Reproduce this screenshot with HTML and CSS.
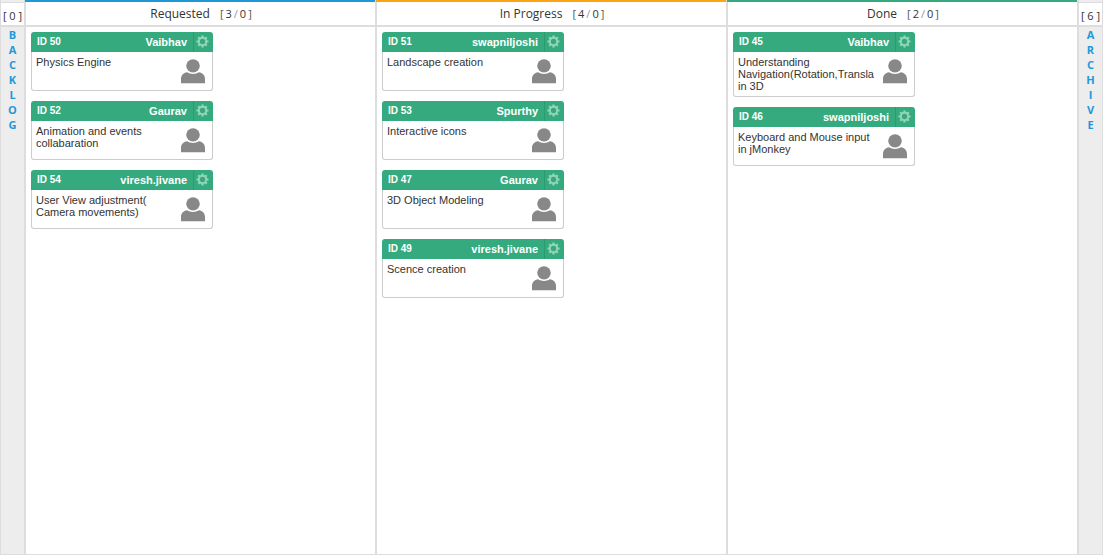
FILE: index.html
```html
<!DOCTYPE html>
<html lang="en">
<head>
<meta charset="utf-8">
<title>Board</title>
<link rel="stylesheet" href="styles.css">
</head>
<body>
<svg class="defs" aria-hidden="true">
  <symbol id="gear" viewBox="0 0 14 14">
    <circle cx="7" cy="7" r="4" fill="none" stroke="currentColor" stroke-width="2.2"/>
    <path d="M7 .5v2M7 11.500v2M.5 7h2M11.500 7h2M2.400 2.400l1.400 1.400M10.200 10.200l1.400 1.400M2.400 11.600l1.400-1.400M10.200 3.800l1.400-1.400" fill="none" stroke="currentColor" stroke-width="2.4"/>
  </symbol>
  <symbol id="person" viewBox="0 0 24 25">
    <ellipse cx="12" cy="6.800" rx="6.800" ry="6.600" fill="currentColor"/>
    <path d="M0 24.300V20C0 16.500 2.200 14 6.200 13.300C9.500 15.600 14.500 15.600 17.800 13.300C21.800 14 24 16.500 24 20V24.300Z" fill="currentColor"/>
  </symbol>
</svg>
<main class="board">
  <aside class="side side-left">
    <div class="side-count">[ 0 ]</div>
    <h2 class="side-name"><span>B</span><span>A</span><span>C</span><span>K</span><span>L</span><span>O</span><span>G</span></h2>
  </aside>
  <section class="column requested">
    <header class="column-head"><h2>Requested</h2><span class="count">[ <b>3</b> <i>/</i> <b>0</b> ]</span></header>
    <div class="cards">
      <article class="card">
        <header class="card-head"><span class="card-id">ID 50</span><span class="owner">Vaibhav</span><button class="settings" aria-label="Settings"><svg><use href="#gear"/></svg></button></header>
        <div class="card-body"><p>Physics Engine</p><svg class="avatar"><use href="#person"/></svg></div>
      </article>
      <article class="card">
        <header class="card-head"><span class="card-id">ID 52</span><span class="owner">Gaurav</span><button class="settings" aria-label="Settings"><svg><use href="#gear"/></svg></button></header>
        <div class="card-body"><p>Animation and events collabaration</p><svg class="avatar"><use href="#person"/></svg></div>
      </article>
      <article class="card">
        <header class="card-head"><span class="card-id">ID 54</span><span class="owner">viresh.jivane</span><button class="settings" aria-label="Settings"><svg><use href="#gear"/></svg></button></header>
        <div class="card-body"><p>User View adjustment( Camera movements)</p><svg class="avatar"><use href="#person"/></svg></div>
      </article>
    </div>
  </section>
  <section class="column progress">
    <header class="column-head"><h2>In Progress</h2><span class="count">[ <b>4</b> <i>/</i> <b>0</b> ]</span></header>
    <div class="cards">
      <article class="card">
        <header class="card-head"><span class="card-id">ID 51</span><span class="owner">swapniljoshi</span><button class="settings" aria-label="Settings"><svg><use href="#gear"/></svg></button></header>
        <div class="card-body"><p>Landscape creation</p><svg class="avatar"><use href="#person"/></svg></div>
      </article>
      <article class="card">
        <header class="card-head"><span class="card-id">ID 53</span><span class="owner">Spurthy</span><button class="settings" aria-label="Settings"><svg><use href="#gear"/></svg></button></header>
        <div class="card-body"><p>Interactive icons</p><svg class="avatar"><use href="#person"/></svg></div>
      </article>
      <article class="card">
        <header class="card-head"><span class="card-id">ID 47</span><span class="owner">Gaurav</span><button class="settings" aria-label="Settings"><svg><use href="#gear"/></svg></button></header>
        <div class="card-body"><p>3D Object Modeling</p><svg class="avatar"><use href="#person"/></svg></div>
      </article>
      <article class="card">
        <header class="card-head"><span class="card-id">ID 49</span><span class="owner">viresh.jivane</span><button class="settings" aria-label="Settings"><svg><use href="#gear"/></svg></button></header>
        <div class="card-body"><p>Scence creation</p><svg class="avatar"><use href="#person"/></svg></div>
      </article>
    </div>
  </section>
  <section class="column done">
    <header class="column-head"><h2>Done</h2><span class="count">[ <b>2</b> <i>/</i> <b>0</b> ]</span></header>
    <div class="cards">
      <article class="card">
        <header class="card-head"><span class="card-id">ID 45</span><span class="owner">Vaibhav</span><button class="settings" aria-label="Settings"><svg><use href="#gear"/></svg></button></header>
        <div class="card-body"><p>Understanding Navigation(Rotation,Transla in 3D</p><svg class="avatar"><use href="#person"/></svg></div>
      </article>
      <article class="card">
        <header class="card-head"><span class="card-id">ID 46</span><span class="owner">swapniljoshi</span><button class="settings" aria-label="Settings"><svg><use href="#gear"/></svg></button></header>
        <div class="card-body"><p>Keyboard and Mouse input in jMonkey</p><svg class="avatar"><use href="#person"/></svg></div>
      </article>
    </div>
  </section>
  <aside class="side side-right">
    <div class="side-count">[ 6 ]</div>
    <h2 class="side-name"><span>A</span><span>R</span><span>C</span><span>H</span><span>I</span><span>V</span><span>E</span></h2>
  </aside>
</main>
</body>
</html>
```
FILE: styles.css
```css
* { box-sizing: border-box; }
body {
  margin: 0;
  padding: 0 1px 1px 0;
  background: #fff;
  color: #333;
  font-family: "Open Sans", sans-serif;
}
h2, p { margin: 0; }
.defs { position: absolute; width: 0; height: 0; }
.board {
  display: grid;
  grid-template-columns: 24px repeat(3, 1fr) 26px;
  min-height: calc(100vh - 1px);
  border-bottom: 1px solid #ddd;
}
.side { background: #ededed; border: 0 solid #ddd; padding-top: 2px; }
.side-left { border-left-width: 1px; }
.side-right { border-left-width: 2px; border-right-width: 1px; }
.side-count {
  height: 25px;
  border-top: 1px solid #ddd;
  border-bottom: 2px solid #ddd;
  background: #fff;
  font-size: 11px;
  line-height: 26px;
  text-align: center;
  white-space: nowrap;
}
.side-name {
  display: flex;
  flex-direction: column;
  align-items: center;
  font-size: 11px;
  font-weight: 700;
  line-height: 15px;
  color: #1f98d8;
}
.column { min-width: 0; border-left: 2px solid #ddd; }
.column-head {
  display: flex;
  justify-content: center;
  gap: 10px;
  height: 27px;
  margin-left: -1px;
  padding-left: 2px;
  border-top: 2px solid;
  border-bottom: 2px solid #ddd;
  line-height: 23px;
}
.requested .column-head { border-top-color: #1f98d8; }
.progress .column-head { border-top-color: #fca311; }
.done .column-head { border-top-color: #35aa7e; }
.column-head h2 { font-size: 12px; font-weight: 400; }
.count { display: flex; gap: 2px; font-size: 11px; color: #555; }
.count b { font-weight: 400; color: #333; }
.count i { font-style: normal; color: #999; }
.cards {
  display: flex;
  flex-direction: column;
  align-items: flex-start;
  gap: 10px;
  padding: 5px;
}
.card {
  width: 182px;
  font-family: "Liberation Sans", sans-serif;
  font-size: 11px;
}
.card-head {
  display: flex;
  height: 20px;
  padding-left: 6px;
  border-radius: 3px 3px 0 0;
  background: #35aa7e;
  color: #fff;
  font-weight: 700;
  line-height: 20px;
}
.card-id { font-size: 10px; }
.owner { margin-left: auto; padding-right: 6px; }
.settings {
  display: grid;
  place-items: center;
  width: 20px;
  padding: 0 2px 2px 0;
  border: 0;
  border-left: 1px solid #2b9a70;
  background: none;
  color: #93d5b9;
}
.settings svg { width: 13px; height: 13px; }
.card-body {
  display: flex;
  justify-content: space-between;
  min-height: 39px;
  padding: 4px 7px 4px 4px;
  border: 1px solid #ccc;
  border-top: 0;
  border-radius: 0 0 3px 3px;
  line-height: 12px;
}
.card-body p { width: 138px; }
.avatar { flex: none; width: 24px; height: 25px; margin-top: 3px; color: #888; }
```
